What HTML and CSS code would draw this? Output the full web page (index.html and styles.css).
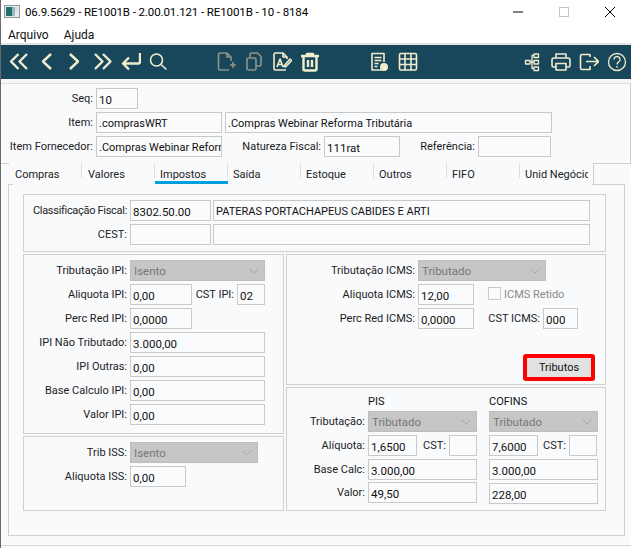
FILE: index.html
```html
<!DOCTYPE html>
<html lang="pt">
<head>
<meta charset="utf-8">
<title>RE1001B</title>
<link rel="stylesheet" href="styles.css">
</head>
<body>
<div class="window">
  <header class="titlebar">
    <svg class="app-icon" width="16" height="13" viewBox="0 0 16 13"><rect x="0.5" y="0.5" width="15" height="12" fill="#e8ecec" stroke="#8b9aa0"/><rect x="2" y="2" width="6" height="9" fill="#1f6f6a"/><rect x="8" y="2" width="3" height="9" fill="#9fb6c4"/><rect x="11" y="2" width="3" height="4" fill="#d6dce0"/></svg>
    <span class="title-text">06.9.5629 - RE1001B - 2.00.01.121 - RE1001B - 10 - 8184</span>
    <div class="win-controls">
      <svg width="12" height="12" viewBox="0 0 12 12"><path d="M1 6h10" stroke="#000" stroke-width="1"/></svg>
      <svg width="12" height="12" viewBox="0 0 12 12"><rect x="1.5" y="1.5" width="9" height="9" fill="none" stroke="#c4c4c4"/></svg>
      <svg width="12" height="12" viewBox="0 0 12 12"><path d="M1 1l10 10M11 1L1 11" stroke="#000" stroke-width="1" fill="none"/></svg>
    </div>
  </header>
  <nav class="menubar"><span>Arquivo</span><span>Ajuda</span></nav>
  <div class="toolbar">
    <div class="tool-group g1">
      <svg class="ico" viewBox="0 0 20 20"><path d="M9.5 2 2 9.5 9.5 17M18 2l-7.500 7.500L18 17"/></svg>
      <svg class="ico" viewBox="0 0 20 20"><path d="M14 2 6 9.500 14 17"/></svg>
      <svg class="ico" viewBox="0 0 20 20"><path d="M5 2l8 7.500L5 17"/></svg>
      <svg class="ico" viewBox="0 0 20 20"><path d="M2 2l7.500 7.500L2 17M10 2l7.500 7.500L10 17"/></svg>
      <svg class="ico" viewBox="0 0 20 20"><path d="M19 1v9a1.500 1.500 0 0 1-1.500 1.500H2M8 5.500l-6 6 6 6"/></svg>
      <svg class="ico thin" viewBox="0 0 20 20"><circle cx="7.500" cy="8" r="6"/><path d="M12 12.500l5.500 5"/></svg>
    </div>
    <div class="tool-group g2">
      <svg class="ico thin off" viewBox="0 0 20 20"><path d="M15 9V5l-4-4H4a1.500 1.500 0 0 0-1.500 1.500v14A1.500 1.500 0 0 0 4 18h9M11 1v4h4M14 13h6M17 10v6"/></svg>
      <svg class="ico thin off" viewBox="0 0 20 20"><path d="M6 5V2.500A1.500 1.500 0 0 1 7.500 1h6L17 4.500v8a1.500 1.500 0 0 1-1.500 1.500H12"/><rect x="3" y="6" width="9" height="12" rx="1.500"/></svg>
      <svg class="ico thin" viewBox="0 0 20 20"><path d="M15 7V5l-4-4H3.500A1.500 1.500 0 0 0 2 2.500v14A1.500 1.500 0 0 0 3.500 18H14M11 1v4h4M5 15l3-8 3 8M6 12.500h4M12 14l6-7 1.500 1.500-6 6.500z"/></svg>
      <svg class="ico" viewBox="0 0 20 20"><path d="M1 4h18M7 4V2h6v2M3.500 4v13a1.500 1.500 0 0 0 1.500 1.500h10a1.500 1.500 0 0 0 1.500-1.500V4M8 8v7M12 8v7"/></svg>
    </div>
    <div class="tool-group g3">
      <svg class="ico thin" viewBox="0 0 20 20"><path d="M13 18H3V1.500h12V10M5.500 5.500h7M5.500 8.500h7M5.500 11.500h4M5.500 14.500h3"/><circle class="dot" cx="15" cy="15" r="4"/></svg>
      <svg class="ico thin" viewBox="0 0 20 20"><rect x="1.500" y="1.500" width="17" height="16.500" rx="1.500"/><path d="M7 1.500V18M13 1.500V18M1.500 7h17M1.500 12.500h17"/></svg>
    </div>
    <div class="tool-group g4">
      <svg class="ico hair" viewBox="0 0 20 20"><rect x="11" y="2" width="4.500" height="3.500"/><rect x="11" y="8.500" width="4.500" height="3.500"/><rect x="11" y="15" width="4.500" height="3.500"/><rect x="2.500" y="8.500" width="4.500" height="3.500"/><path d="M7 10h4M9 10V3.500h2M9 10v6.500h2"/></svg>
      <svg class="ico thin" viewBox="0 0 20 20"><path d="M5 6V2h10v4M5 15H2.500A1.500 1.500 0 0 1 1 13.500V8a2 2 0 0 1 2-2h14a2 2 0 0 1 2 2v5.500a1.500 1.500 0 0 1-1.500 1.500H15"/><rect x="5" y="11.500" width="10" height="6.500"/></svg>
      <svg class="ico thin" viewBox="0 0 20 20"><path d="M11 5V2.500H3A1.500 1.500 0 0 0 1.500 4v12A1.500 1.500 0 0 0 3 17.500h8V14M7 9.500h12M15 5l4.500 4.500L15 14"/></svg>
      <svg class="ico hair" viewBox="0 0 20 20"><circle cx="10" cy="10" r="8.500"/><path d="M7 7.500a3 3 0 1 1 4.500 2.600c-1 .6-1.500 1.100-1.500 2.400M10 14v1.800"/></svg>
    </div>
  </div>
  <div class="toolbar-gap"></div>

  <section class="top-panel">
    <div class="row"><label class="lbl w92">Seq:</label><div class="field num w42">10</div></div>
    <div class="row"><label class="lbl w92">Item:</label><div class="field w126">.comprasWRT</div><div class="field w327">.Compras Webinar Reforma Tributária</div></div>
    <div class="row"><label class="lbl w92">Item Fornecedor:</label><div class="field w126">.Compras Webinar Reforma</div><label class="lbl w96">Natureza Fiscal:</label><div class="field num w76">111rat</div><label class="lbl w72">Referência:</label><div class="field w73"></div></div>
  </section>

  <div class="tabs">
    <div class="tab-edge-left"></div>
    <div class="tab shift">Compras</div>
    <div class="tab shift">Valores</div>
    <div class="tab active">Impostos</div>
    <div class="tab">Saída</div>
    <div class="tab">Estoque</div>
    <div class="tab">Outros</div>
    <div class="tab">FIFO</div>
    <div class="tab last"><span class="tab-clip">Unid Negócios</span></div>
    <div class="tab-edge-right"></div>
  </div>

  <main class="page">
    <section class="group g-class">
      <div class="row"><label class="lbl w103 tight-text">Classificação Fiscal:</label><div class="pair"><div class="field num w81">8302.50.00</div><div class="field w377">PATERAS PORTACHAPEUS CABIDES E ARTI</div></div></div>
      <div class="row"><label class="lbl w103">CEST:</label><div class="pair"><div class="field w81"></div><div class="field w377"></div></div></div>
    </section>
    <div class="columns">
      <div class="col col-left">
        <section class="group g-ipi">
          <div class="row"><label class="lbl w103">Tributação IPI:</label><div class="select w135">Isento<svg class="chev" viewBox="0 0 12 7"><path d="M1 1l5 5 5-5"/></svg></div></div>
          <div class="row"><label class="lbl w103">Aliquota IPI:</label><div class="field num w62">0,00</div><label class="lbl w39">CST IPI:</label><div class="field num w28">02</div></div>
          <div class="row"><label class="lbl w103">Perc Red IPI:</label><div class="field num w62">0,0000</div></div>
          <div class="row"><label class="lbl w103">IPI Não Tributado:</label><div class="field num w135">3.000,00</div></div>
          <div class="row"><label class="lbl w103">IPI Outras:</label><div class="field num w135">0,00</div></div>
          <div class="row"><label class="lbl w103">Base Calculo IPI:</label><div class="field num w135">0,00</div></div>
          <div class="row"><label class="lbl w103">Valor IPI:</label><div class="field num w135">0,00</div></div>
        </section>
        <section class="group g-iss">
          <div class="row"><label class="lbl w103">Trib ISS:</label><div class="select w128">Isento<svg class="chev" viewBox="0 0 12 7"><path d="M1 1l5 5 5-5"/></svg></div></div>
          <div class="row"><label class="lbl w103">Aliquota ISS:</label><div class="field num w56">0,00</div></div>
        </section>
      </div>
      <div class="col col-right">
        <section class="group g-icms">
          <div class="row"><label class="lbl w128">Tributação ICMS:</label><div class="select w128">Tributado<svg class="chev" viewBox="0 0 12 7"><path d="M1 1l5 5 5-5"/></svg></div></div>
          <div class="row"><label class="lbl w128">Aliquota ICMS:</label><div class="field num w56">12,00</div><div class="check-wrap"><span class="check"></span><span class="check-label">ICMS Retido</span></div></div>
          <div class="row"><label class="lbl w128">Perc Red ICMS:</label><div class="field num w56">0,0000</div><label class="lbl w63">CST ICMS:</label><div class="field num w35">000</div></div>
          <div class="btn-row"><button class="btn" type="button">Tributos</button></div>
        </section>
        <section class="group g-pis">
          <div class="row title-row"><span class="spacer w78"></span><span class="col-title w109">PIS</span><span class="col-title w109 ml9">COFINS</span></div>
          <div class="row"><label class="lbl w78">Tributação:</label><div class="select w109">Tributado<svg class="chev" viewBox="0 0 12 7"><path d="M1 1l5 5 5-5"/></svg></div><div class="select w109 ml9">Tributado<svg class="chev" viewBox="0 0 12 7"><path d="M1 1l5 5 5-5"/></svg></div></div>
          <div class="row"><label class="lbl w78">Alíquota:</label><div class="pair w109"><div class="field num w49">1,6500</div><label class="lbl w26">CST:</label><div class="field w28"></div></div><div class="pair w109 ml9"><div class="field num w49">7,6000</div><label class="lbl w25">CST:</label><div class="field w28"></div></div></div>
          <div class="row"><label class="lbl w78">Base Calc:</label><div class="field num w109">3.000,00</div><div class="field num w109 ml9">3.000,00</div></div>
          <div class="row tight"><label class="lbl w78">Valor:</label><div class="field num w109">49,50</div><div class="field num w109 ml9 down1">228,00</div></div>
        </section>
      </div>
    </div>
  </main>
  <div class="footer-gap"></div>
</div>
</body>
</html>
```
FILE: styles.css
```css
* { box-sizing: border-box; }
html, body { margin: 0; padding: 0; }
body { width: 631px; height: 548px; overflow: hidden; background: #f9fafc; font-family: "Roboto", "Noto Sans", sans-serif; font-size: 11px; color: #111; }
.window { width: 631px; height: 548px; border-left: 1px solid #6a6a6a; display: flex; flex-direction: column; }

.titlebar { height: 25px; background: #fff; display: flex; align-items: center; padding: 0 0 2px 3px; flex: none; }
.app-icon { margin-right: 5px; }
.title-text { color: #000; font-size: 11.5px; letter-spacing: -0.1px; }
.win-controls { margin-left: auto; display: flex; gap: 34px; padding-right: 15px; }
.menubar { height: 18px; background: #fff; display: flex; gap: 15px; padding-left: 7px; font-size: 12px; line-height: 20px; flex: none; }

.toolbar { height: 36px; background: #18475c; border-top: 2px solid #e4e4e4; display: flex; padding-top: 7px; flex: none; }
.tool-group { display: flex; gap: 8px; }
.g1 { margin-left: 8px; }
.g2 { margin-left: 47px; }
.g3 { margin-left: 49px; gap: 9px; }
.g4 { margin-left: 105px; }
.ico { width: 20px; height: 20px; fill: none; stroke: #f1edcc; stroke-width: 2.4; stroke-linejoin: round; }
.ico.thin { stroke-width: 1.6; }
.ico.hair { stroke-width: 1.3; }
.ico.off { stroke: #8f9488; }
.ico .dot { fill: #f1edcc; stroke: none; }
.toolbar-gap { height: 4px; background: #f7f7f7; flex: none; }

.row { display: flex; gap: 3px; height: 21px; }
.row + .row { margin-top: 3px; }
.row.tight { margin-top: 2px; }
.pair { display: flex; gap: 2px; }
.pair.w109 { gap: 3px; }
.lbl { text-align: right; line-height: 21px; white-space: nowrap; flex: none; color: #1c1c1c; }
.tight-text { letter-spacing: -0.3px; }
.field { height: 21px; border: 1px solid #c9c9c9; background: #fafbfd; line-height: 22px; padding-left: 2px; overflow: hidden; white-space: nowrap; flex: none; color: #111; }
.field.num { font-size: 11.5px; }
.select { height: 21px; border: 1px solid #bdbdbd; background: #c6c6c6; color: #777; font-size: 11.5px; line-height: 21px; padding-left: 3px; display: flex; justify-content: space-between; flex: none; }
.chev { width: 10px; height: 6px; margin: 7px 5px 0 0; fill: none; stroke: #a0a0a0; stroke-width: 1; }
.down1 { margin-top: 1px; }
.ml9 { margin-left: 9px; }

.w25 { width: 25px; } .w26 { width: 26px; } .w28 { width: 28px; } .w35 { width: 35px; } .w39 { width: 39px; }
.w42 { width: 42px; } .w49 { width: 49px; } .w56 { width: 56px; } .w62 { width: 62px; } .w63 { width: 63px; }
.w72 { width: 72px; } .w73 { width: 73px; } .w76 { width: 76px; } .w78 { width: 78px; } .w81 { width: 81px; }
.w92 { width: 92px; } .w96 { width: 96px; } .w103 { width: 103px; } .w109 { width: 109px; } .w126 { width: 126px; }
.w128 { width: 128px; } .w135 { width: 135px; } .w327 { width: 327px; } .w377 { width: 377px; }

.top-panel { height: 80px; padding-top: 4px; border-top: 1px solid #dcdcdc; border-right: 1px solid #cfcfcf; flex: none; }

.tabs { height: 21px; display: flex; flex: none; }
.tab-edge-left { width: 8px; border-top: 1px solid #cfcfcf; }
.tab { width: 73px; height: 21px; padding: 3px 0 0 5px; line-height: 17px; position: relative; color: #222; }
.tab.shift { padding-left: 6px; }
.tab::after { content: ""; position: absolute; right: 0; top: 0; width: 1px; height: 15px; background: #dedede; }
.tab.active { border-bottom: 3px solid #00a0e0; }
.tab.last { padding-right: 5px; }
.tab.last::after { display: none; }
.tab-clip { display: block; overflow: hidden; white-space: nowrap; }
.tab-edge-right { flex: 1; border-top: 1px solid #cfcfcf; border-left: 1px solid #cfcfcf; }

.page { width: 617px; height: 352px; margin-left: 7px; padding: 10px 0 0 14px; border: 1px solid #cfcfcf; border-top: none; flex: none;
  background-image: linear-gradient(#cfcfcf, #cfcfcf), linear-gradient(#cfcfcf, #cfcfcf);
  background-repeat: no-repeat; background-size: 4px 1px, 32px 1px; background-position: left top, right top; }
.group { border: 1px solid #d0d0d0; padding-top: 5px; }
.g-class { width: 583px; height: 58px; }
.columns { display: flex; gap: 2px; margin-top: 2px; }
.col { display: flex; flex-direction: column; gap: 2px; }
.col-left { width: 261px; }
.col-right { width: 320px; }
.g-ipi { height: 180px; }
.g-iss { height: 75px; }
.g-icms { height: 131px; }
.g-pis { height: 124px; }

.check-wrap { display: flex; gap: 3px; margin-left: 11px; align-items: flex-start; }
.check { width: 13px; height: 13px; margin-top: 3px; border: 1px solid #c9c9c9; background: #fafbfd; }
.check-label { color: #8a8a8a; line-height: 21px; }
.btn-row { display: flex; justify-content: flex-end; margin-top: 25px; padding-right: 10px; }
.btn { width: 72px; height: 27px; border: 4px solid #f00; border-radius: 3px; background: #e1e1e1; font: inherit; color: #111; padding: 0; line-height: 17px; }

.title-row { height: 15px; }
.col-title { line-height: 17px; }
.spacer { flex: none; }
.footer-gap { height: 10px; border-bottom: 1px solid #d8d8d8; flex: none; }
```
